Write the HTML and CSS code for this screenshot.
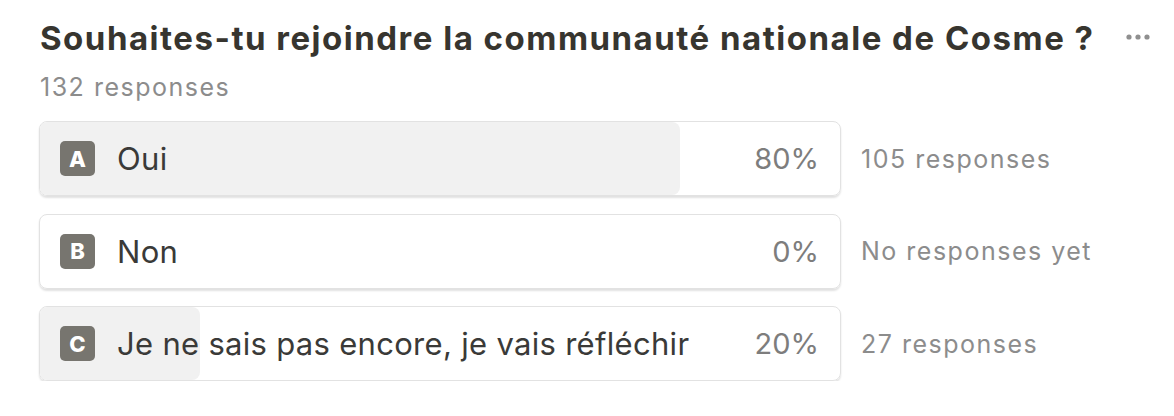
FILE: index.html
```html
<!DOCTYPE html>
<html lang="fr">
<head>
    <meta charset="UTF-8">
    <meta name="viewport" content="width=device-width, initial-scale=1.0">
    <title>Résultats du sondage</title>
    <link rel="stylesheet" href="styles.css">
</head>
<body>
    <div class="poll">
        <div class="poll-header">
            <h1 class="poll-title">Souhaites-tu rejoindre la communauté nationale de Cosme ?</h1>
            <span class="poll-more">
                <svg width="24" height="6" viewBox="0 0 24 6">
                    <circle cx="3" cy="3" r="2.6" fill="#8f8f8f"/>
                    <circle cx="12" cy="3" r="2.6" fill="#8f8f8f"/>
                    <circle cx="21" cy="3" r="2.6" fill="#8f8f8f"/>
                </svg>
            </span>
        </div>
        <p class="poll-total">132 responses</p>

        <div class="poll-options">
            <div class="option-row">
                <div class="option-box">
                    <div class="option-fill" style="width: 80%"></div>
                    <span class="option-badge">A</span>
                    <span class="option-label">Oui</span>
                    <span class="option-pct">80%</span>
                </div>
                <span class="option-count">105 responses</span>
            </div>

            <div class="option-row">
                <div class="option-box">
                    <div class="option-fill" style="width: 0%"></div>
                    <span class="option-badge">B</span>
                    <span class="option-label">Non</span>
                    <span class="option-pct">0%</span>
                </div>
                <span class="option-count">No responses yet</span>
            </div>

            <div class="option-row">
                <div class="option-box">
                    <div class="option-fill" style="width: 20%"></div>
                    <span class="option-badge">C</span>
                    <span class="option-label">Je ne sais pas encore, je vais réfléchir</span>
                    <span class="option-pct">20%</span>
                </div>
                <span class="option-count">27 responses</span>
            </div>
        </div>
    </div>
</body>
</html>
```

FILE: styles.css
```css
body {
    margin: 0;
    background: #ffffff;
    font-family: 'Inter', 'Noto Sans', sans-serif;
    color: #37352f;
}

.poll {
    padding: 16px 0 0 40px;
    width: 1110px;
}

.poll-header {
    display: flex;
    align-items: center;
    justify-content: space-between;
}

.poll-title {
    margin: 0;
    font-size: 33px;
    font-weight: 700;
    line-height: 44px;
    letter-spacing: 1.5px;
    color: #37352f;
}

.poll-more {
    display: flex;
    align-items: center;
    margin-top: -2px;
}

.poll-total {
    margin: 11px 0 0 0;
    font-size: 25px;
    line-height: 32px;
    letter-spacing: 1.5px;
    color: #8c8c8c;
}

.poll-options {
    display: flex;
    flex-direction: column;
    gap: 17.5px;
    margin-top: 18px;
}

.option-row {
    display: flex;
    align-items: center;
    gap: 20px;
}

/* bar with fill behind */
.option-box {
    position: relative;
    width: 802px;
    height: 75px;
    box-sizing: border-box;
    margin-left: -1px;
    display: flex;
    align-items: center;
    border: 1px solid #e2e2e2;
    border-radius: 8px;
    box-shadow: 0 2px 2px rgba(0, 0, 0, 0.12);
    overflow: hidden;
}

.option-fill {
    position: absolute;
    left: 0;
    top: 0;
    bottom: 0;
    background: #f1f1f1;
    border-radius: 0 8px 8px 0;
}

.option-badge {
    position: relative;
    width: 35px;
    height: 35px;
    margin-left: 20px;
    border-radius: 5px;
    background: #77756f;
    color: #ffffff;
    font-weight: 800;
    font-size: 22px;
    display: flex;
    align-items: center;
    justify-content: center;
}

.option-label {
    position: relative;
    margin-left: 22px;
    font-size: 31px;
    letter-spacing: 0.3px;
    color: #3a3a38;
    flex: 1;
}

.option-pct {
    position: relative;
    margin-right: 21px;
    font-size: 29px;
    color: #7d7d7d;
}

.option-count {
    font-size: 25px;
    letter-spacing: 1.5px;
    color: #8c8c8c;
}
```
